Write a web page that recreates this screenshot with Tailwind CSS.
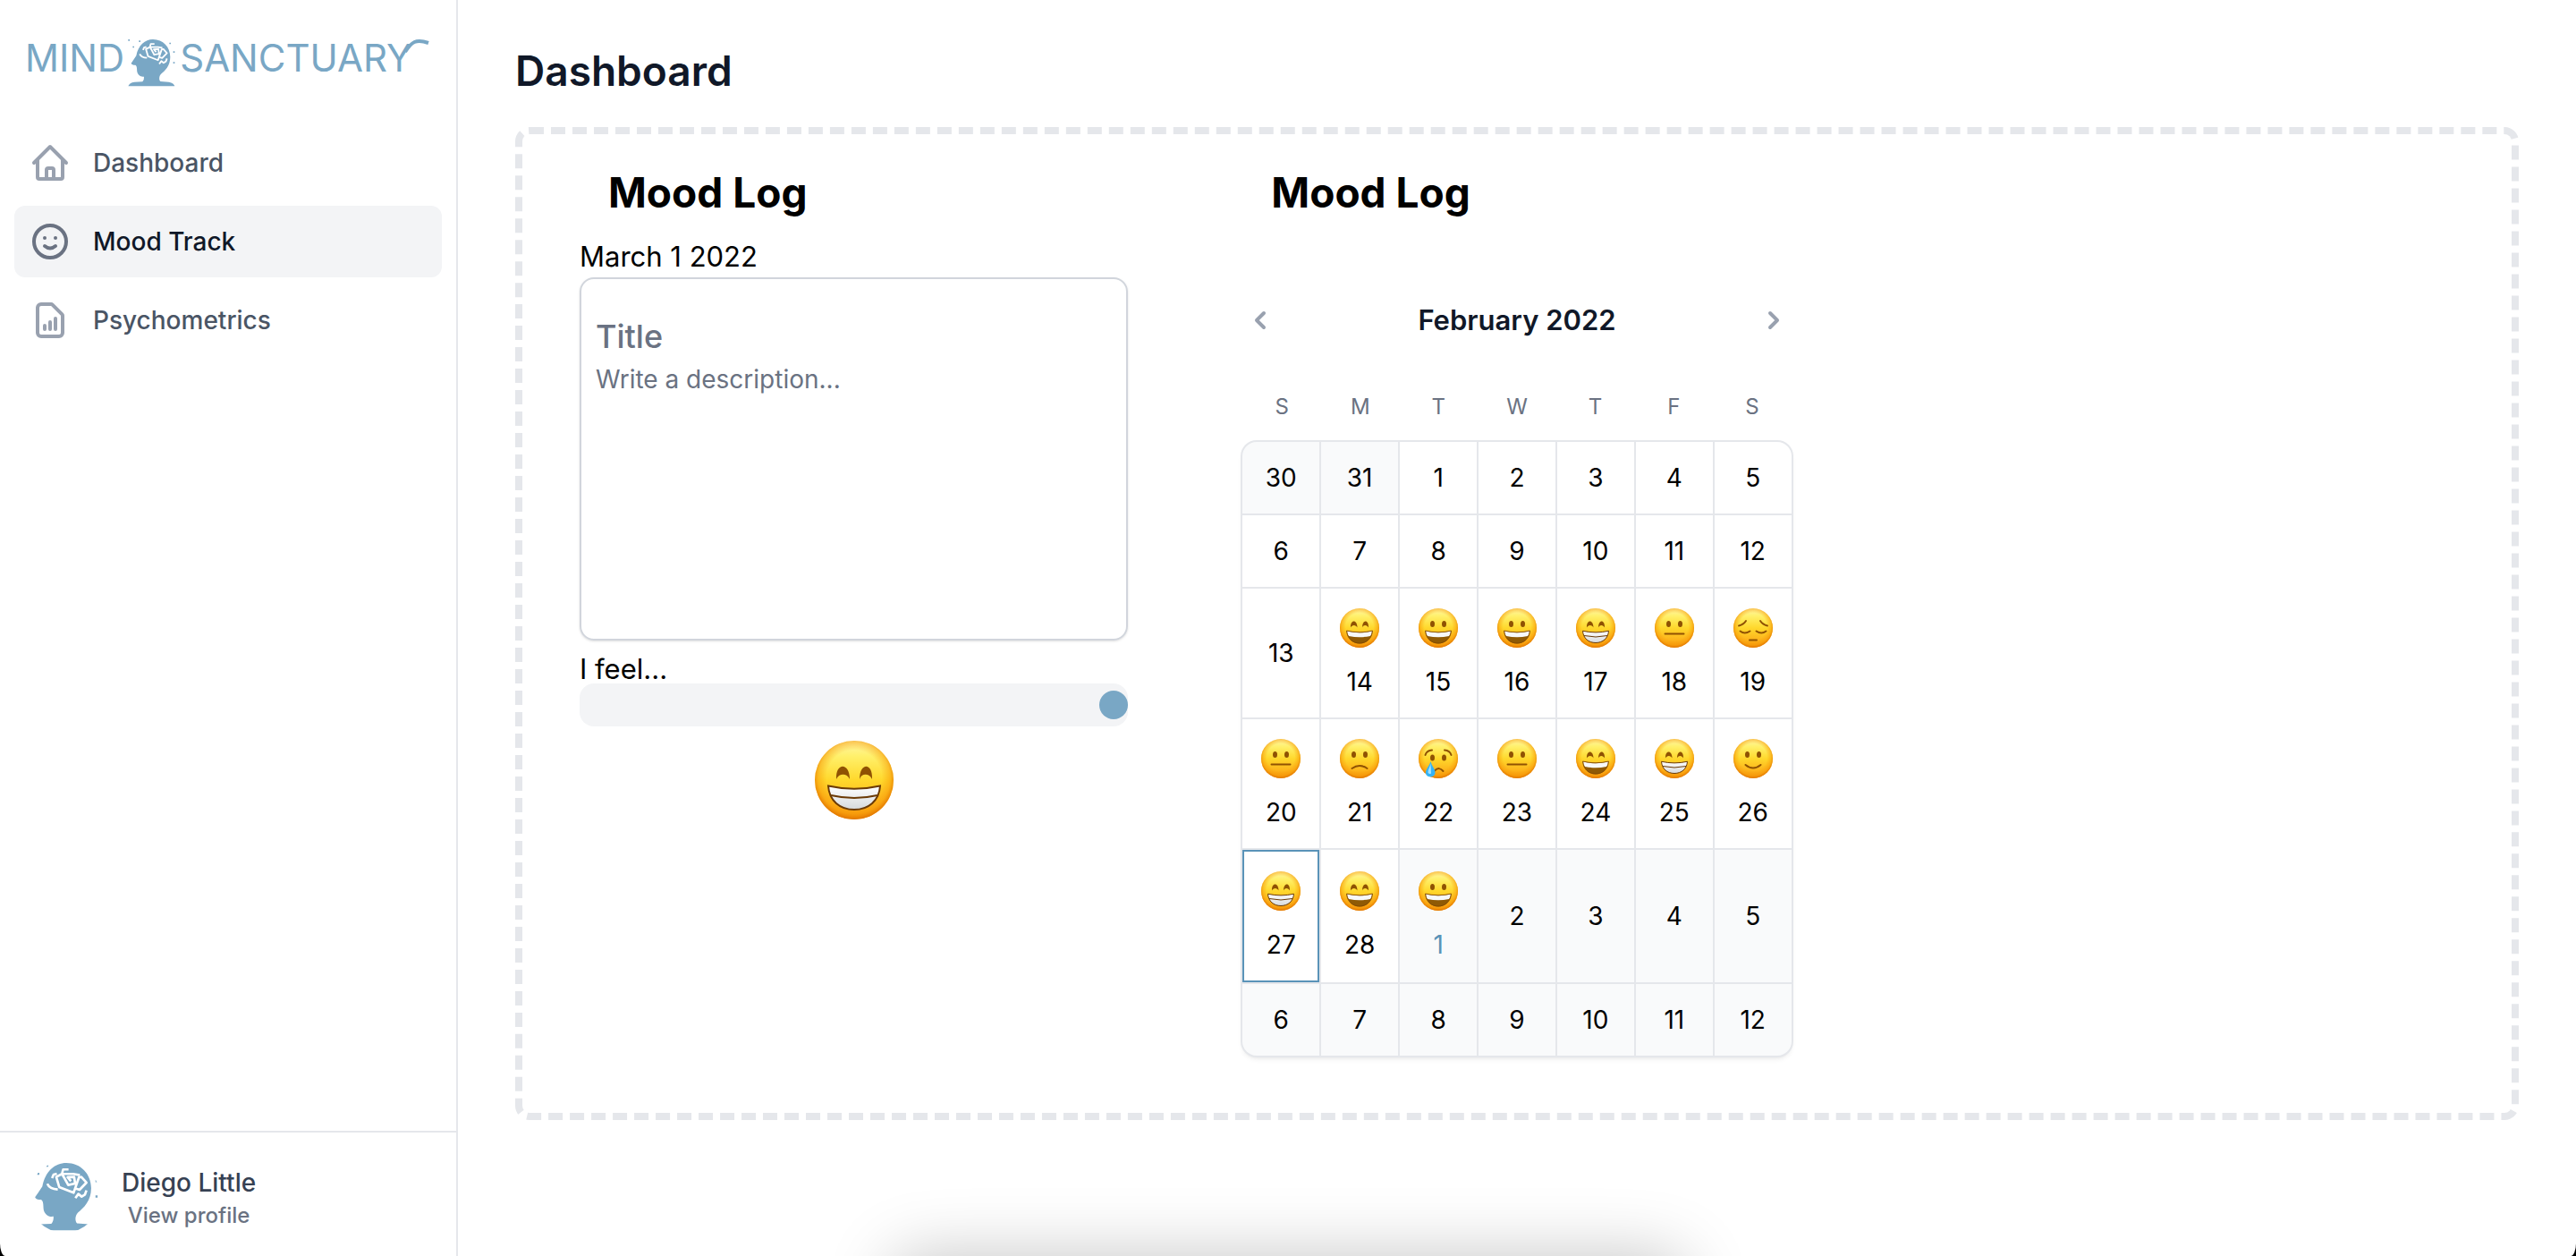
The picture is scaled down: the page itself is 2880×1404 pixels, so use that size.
<!DOCTYPE html>
<html lang="en">
<head>
<meta charset="utf-8">
<meta name="viewport" content="width=device-width, initial-scale=1">
<title>Mind Sanctuary – Dashboard</title>
<script src="https://cdn.jsdelivr.net/npm/@tailwindcss/browser@4"></script>
</head>
<body class="bg-black font-['Inter',sans-serif] text-black">

<!-- Shared artwork -->
<svg width="0" height="0" class="absolute" aria-hidden="true">
  <defs>
    <linearGradient id="skin" x1="0" y1="0" x2="0" y2="1">
      <stop offset="0" stop-color="#fff6a8"/><stop offset=".2" stop-color="#fff06a"/>
      <stop offset=".5" stop-color="#ffd82c"/><stop offset=".8" stop-color="#fdb41c"/><stop offset="1" stop-color="#f39208"/>
    </linearGradient>
    <radialGradient id="rim" cx=".5" cy=".47" r=".53">
      <stop offset=".66" stop-color="#f79a08" stop-opacity="0"/><stop offset=".86" stop-color="#f79a08" stop-opacity=".5"/>
      <stop offset="1" stop-color="#e07400"/>
    </radialGradient>
    <linearGradient id="teeth" x1="0" y1="0" x2="0" y2="1">
      <stop offset="0" stop-color="#fff"/><stop offset="1" stop-color="#d5d9dc"/>
    </linearGradient>
    <symbol id="face" viewBox="0 0 88 88">
      <circle cx="44" cy="44" r="44" fill="url(#skin)"/><circle cx="44" cy="44" r="44" fill="url(#rim)"/>
    </symbol>
    <symbol id="happy-eyes" viewBox="0 0 88 88">
      <path d="M24 43C23 24 39 24 39 43C36 36 27 36 24 43ZM50 43C50 24 65 24 64 43C61 36 52 36 50 43Z" fill="#8f5203"/>
    </symbol>
    <symbol id="round-eyes" viewBox="0 0 88 88">
      <ellipse cx="31" cy="35" rx="5" ry="7" fill="#8f5203"/><ellipse cx="57" cy="35" rx="5" ry="7" fill="#8f5203"/>
    </symbol>
    <symbol id="open-mouth" viewBox="0 0 88 88">
      <path d="M15 50Q44 57 73 50C72 68 59 79 44 79S16 68 15 50Z" fill="#8f5a05"/>
      <path d="M16 51Q44 58 72 51Q71 58 68 62Q44 67 20 62Q17 58 16 51Z" fill="#f7f9fa"/>
      <path d="M15 50Q44 57 73 50C72 68 59 78 44 78S16 68 15 50Z" fill="none" stroke="#7d4603" stroke-width="1.5"/>
    </symbol>
    <symbol id="beam" viewBox="0 0 88 88">
      <use href="#face"/><use href="#happy-eyes"/>
      <path d="M15 50.500Q44 57 73 50.500C72 67 60 77 44 77S16 67 15 50.500Z" fill="url(#teeth)" stroke="#6b3a05" stroke-width="2"/>
      <path d="M18 61Q44 67 70 61" fill="none" stroke="#6b3a05" stroke-width="2"/>
    </symbol>
    <symbol id="laugh" viewBox="0 0 88 88"><use href="#face"/><use href="#happy-eyes"/><use href="#open-mouth"/></symbol>
    <symbol id="grin" viewBox="0 0 88 88"><use href="#face"/><use href="#round-eyes"/><use href="#open-mouth"/></symbol>
    <symbol id="neutral" viewBox="0 0 88 88"><use href="#face"/><use href="#round-eyes"/><path d="M23 57H65" stroke="#8f5203" stroke-width="4" stroke-linecap="round"/></symbol>
    <symbol id="smile" viewBox="0 0 88 88"><use href="#face"/><use href="#round-eyes"/><path d="M27 58Q44 72 61 58" fill="none" stroke="#8f5203" stroke-width="4" stroke-linecap="round"/></symbol>
    <symbol id="frown" viewBox="0 0 88 88"><use href="#face"/><use href="#round-eyes"/><path d="M27 66Q44 54 61 66" fill="none" stroke="#8f5203" stroke-width="4" stroke-linecap="round"/></symbol>
    <symbol id="pensive" viewBox="0 0 88 88">
      <use href="#face"/>
      <path d="M12 39Q23 36 28 28M60 28Q65 36 76 39M15 51Q25 59 37 51M51 51Q63 59 73 51M36 71H52" fill="none" stroke="#8f5203" stroke-width="4" stroke-linecap="round"/>
    </symbol>
    <symbol id="cry" viewBox="0 0 88 88">
      <use href="#face"/><ellipse cx="31" cy="42" rx="5" ry="7" fill="#8f5203"/><ellipse cx="57" cy="42" rx="5" ry="7" fill="#8f5203"/>
      <path d="M15 36Q18 26 30 25M58 25Q70 26 73 36M36 71Q46 61 55 72" fill="none" stroke="#8f5203" stroke-width="4" stroke-linecap="round"/>
      <path d="M27 50C24 61 16 67 16 75C16 88 37 88 37 75C37 67 29 60 27 50Z" fill="#35b3f5"/><path d="M27 55C25 64 21 69 21 75Q24 80 28 77Z" fill="#a6e3ff"/>
    </symbol>
    <symbol id="head" viewBox="0 0 210 210">
      <path fill="#79a7c5" d="M107 29C141 29 165 55 165 88C165 118 147 134 134 145C127 152 127 165 132 170L160 172Q178 176 180 186H24Q28 174 45 172L72 171Q78 165 77 154C65 156 56 148 54 138C53 128 54 118 48 115Q36 115 34 109Q42 98 51 84C58 48 80 29 107 29Z"/>
      <g transform="translate(-5.700 -12.800) scale(.697)" fill="none" stroke="#fff" stroke-width="8" stroke-linejoin="round">
        <path d="M114 111L119 99L130 96M169 82H151L147 97L156 112L168 134L191 129L188 107L166 108L177 121M207 101L185 97H147L128 107L138 141L186 160L204 108L212 107L229 126L206 150L188 144M98 130Q106 148 133 149M192 178L202 164L213 173L224 166L229 152"/>
      </g>
      <path fill="#79a7c5" d="M24 29h5v5h-5zM60 33h5v5h-5zM39 52h5v5h-5zM162 40h5v5h-5zM175 69h5v5h-5zM175 105h5v5h-5z"/>
    </symbol>
  </defs>
</svg>

<div class="relative flex min-h-screen overflow-hidden rounded-b-[6px_14px] bg-white">

  <aside class="flex w-[512px] shrink-0 flex-col border-r-2 border-gray-200">
    <a href="#" aria-label="Mind Sanctuary" class="flex h-[142px] items-start pt-[42px] pl-7 text-[#79a7c5]">
      <span class="text-[42px] leading-[46px]">MIND</span>
      <svg class="ml-1 h-[55px] w-[54px] shrink-0" viewBox="23 23 162 165"><use href="#head" width="210" height="210"/></svg>
      <span class="ml-1 text-[42px] leading-[46px]">SANCTUARY</span>
      <svg class="-ml-4 h-6 w-9 shrink-0" viewBox="0 0 36 24" fill="none" stroke="currentColor" stroke-width="4"><path d="M8 16C15 5 20 1 34 6"/></svg>
    </a>
    <nav class="flex flex-col gap-2 px-4 text-[28px] leading-10 font-medium text-gray-600">
      <a href="#" class="flex h-20 items-center gap-6 rounded-xl px-4">
        <svg class="size-12 text-gray-400" viewBox="0 0 24 24" fill="none" stroke="currentColor" stroke-width="2" stroke-linecap="round" stroke-linejoin="round"><path d="M3 12l2-2m0 0l7-7 7 7M5 10v10a1 1 0 001 1h3m10-11l2 2m-2-2v10a1 1 0 01-1 1h-3m-6 0a1 1 0 001-1v-4a1 1 0 011-1h2a1 1 0 011 1v4a1 1 0 001 1m-6 0h6"/></svg>
        Dashboard
      </a>
      <a href="#" aria-current="page" class="flex h-20 items-center gap-6 rounded-xl bg-gray-100 px-4 text-gray-900">
        <svg class="size-12 text-gray-500" viewBox="0 0 24 24" fill="none" stroke="currentColor" stroke-width="2" stroke-linecap="round" stroke-linejoin="round"><circle cx="12" cy="12" r="9"/><path d="M9 10h.01M15 10h.01M9 14.500Q12 17 15 14.500"/></svg>
        Mood Track
      </a>
      <a href="#" class="flex h-20 items-center gap-6 rounded-xl px-4">
        <svg class="size-12 text-gray-400" viewBox="0 0 24 24" fill="none" stroke="currentColor" stroke-width="2" stroke-linecap="round" stroke-linejoin="round"><path d="M9 17v-2m3 2v-4m3 4v-6m2 10H7a2 2 0 01-2-2V5a2 2 0 012-2h5.586a1 1 0 01.707.293l5.414 5.414a1 1 0 01.293.707V19a2 2 0 01-2 2z"/></svg>
        Psychometrics
      </a>
    </nav>
    <a href="#" class="mt-auto flex h-[140px] items-start gap-6 border-t-2 border-gray-200 px-8 pt-8 font-medium">
      <svg class="size-20 shrink-0 rounded-full" viewBox="19 25 167 167"><use href="#head" width="210" height="210"/></svg>
      <span class="flex flex-col items-center pt-1">
        <span class="text-[28px] leading-10 text-gray-700">Diego Little</span>
        <span class="text-2xl leading-[34px] text-gray-500">View profile</span>
      </span>
    </a>
  </aside>

  <main class="min-w-0 flex-1 px-16 pt-12">
    <h1 class="text-[46px] leading-[62px] font-semibold text-gray-900">Dashboard</h1>

    <div class="mt-8 grid grid-cols-3 gap-x-32 rounded-2xl border-8 border-dashed border-gray-200 px-16 pt-[29px] pb-16">
      <section>
        <h2 class="pl-8 text-[46px] leading-[72px] font-bold">Mood Log</h2>
        <p class="mt-3 text-[31px] leading-[47px]">March 1 2022</p>
        <form>
          <div class="rounded-2xl border-2 border-gray-300 px-4 pt-9 shadow-sm">
            <input type="text" aria-label="Title" placeholder="Title" class="block h-14 w-full text-4xl font-medium outline-none placeholder:text-gray-500">
            <textarea aria-label="Description" placeholder="Write a description..." class="block h-[310px] w-full resize-none text-[28px] leading-10 outline-none placeholder:text-gray-500"></textarea>
          </div>
          <label for="feel" class="mt-4 block text-[31px] leading-8">I feel...</label>
          <input id="feel" type="range" min="0" max="10" value="10" class="block h-12 w-full appearance-none rounded-2xl bg-gray-100 [&::-webkit-slider-thumb]:size-8 [&::-webkit-slider-thumb]:appearance-none [&::-webkit-slider-thumb]:rounded-full [&::-webkit-slider-thumb]:bg-[#79a7c5]">
        </form>
        <svg class="mx-auto mt-4 size-[88px]" role="img" aria-label="Beaming face"><use href="#beam"/></svg>
      </section>

      <section>
        <h2 class="pl-8 text-[46px] leading-[72px] font-bold">Mood Log</h2>
        <div class="mt-[83px] flex h-12 items-center justify-between">
          <button type="button" aria-label="Previous month" class="text-gray-400"><svg class="size-10" viewBox="0 0 20 20" fill="currentColor"><path fill-rule="evenodd" d="M12.707 5.293a1 1 0 010 1.414L9.414 10l3.293 3.293a1 1 0 01-1.414 1.414l-4-4a1 1 0 010-1.414l4-4a1 1 0 011.414 0z"/></svg></button>
          <h3 class="text-[31px] leading-12 font-semibold text-gray-900">February 2022</h3>
          <button type="button" aria-label="Next month" class="text-gray-400"><svg class="size-10" viewBox="0 0 20 20" fill="currentColor"><path fill-rule="evenodd" d="M7.293 14.707a1 1 0 010-1.414L10.586 10 7.293 6.707a1 1 0 011.414-1.414l4 4a1 1 0 010 1.414l-4 4a1 1 0 01-1.414 0z"/></svg></button>
        </div>
        <div class="mt-[53px] grid grid-cols-7 text-center text-2xl leading-10 text-gray-500">
          <span>S</span><span>M</span><span>T</span><span>W</span><span>T</span><span>F</span><span>S</span>
        </div>
        <div id="days" class="mt-[19px] grid grid-cols-7 gap-0.5 overflow-hidden rounded-2xl bg-gray-200 text-[28px] leading-10 shadow-md ring-2 ring-gray-200"></div>
      </section>
    </div>
  </main>

  <!-- Soft shade rising from the bottom edge -->
  <div class="pointer-events-none absolute inset-x-0 top-full flex justify-center">
    <div class="h-40 w-[884px] rounded-3xl shadow-[0_0_76px_0_rgba(0,0,0,0.23)]"></div>
  </div>
</div>

<script>
  const moods = {
    15: 'laugh', 16: 'grin', 17: 'grin', 18: 'beam', 19: 'neutral', 20: 'pensive',
    21: 'neutral', 22: 'frown', 23: 'cry', 24: 'neutral', 25: 'laugh', 26: 'beam', 27: 'smile',
    28: 'beam', 29: 'laugh', 30: 'grin'
  };
  const start = new Date(2022, 0, 30);
  const grid = document.getElementById('days');
  for (let i = 0; i < 42; i++) {
    const date = new Date(start.getFullYear(), start.getMonth(), start.getDate() + i);
    const button = document.createElement('button');
    button.type = 'button';
    button.className = 'flex flex-col items-center justify-center gap-[18px] py-5';
    button.classList.add(date.getMonth() === 1 ? 'bg-white' : 'bg-gray-50');
    if (i === 28) button.classList.add('border-2', 'border-[#5a93b8]');
    if (i === 30) button.classList.add('text-[#5a93b8]');
    const face = moods[i] ? `<svg class="mt-0.5 size-11" aria-hidden="true"><use href="#${moods[i]}"/></svg>` : '';
    button.innerHTML = `${face}<time>${date.getDate()}</time>`;
    grid.append(button);
  }
</script>
</body>
</html>
